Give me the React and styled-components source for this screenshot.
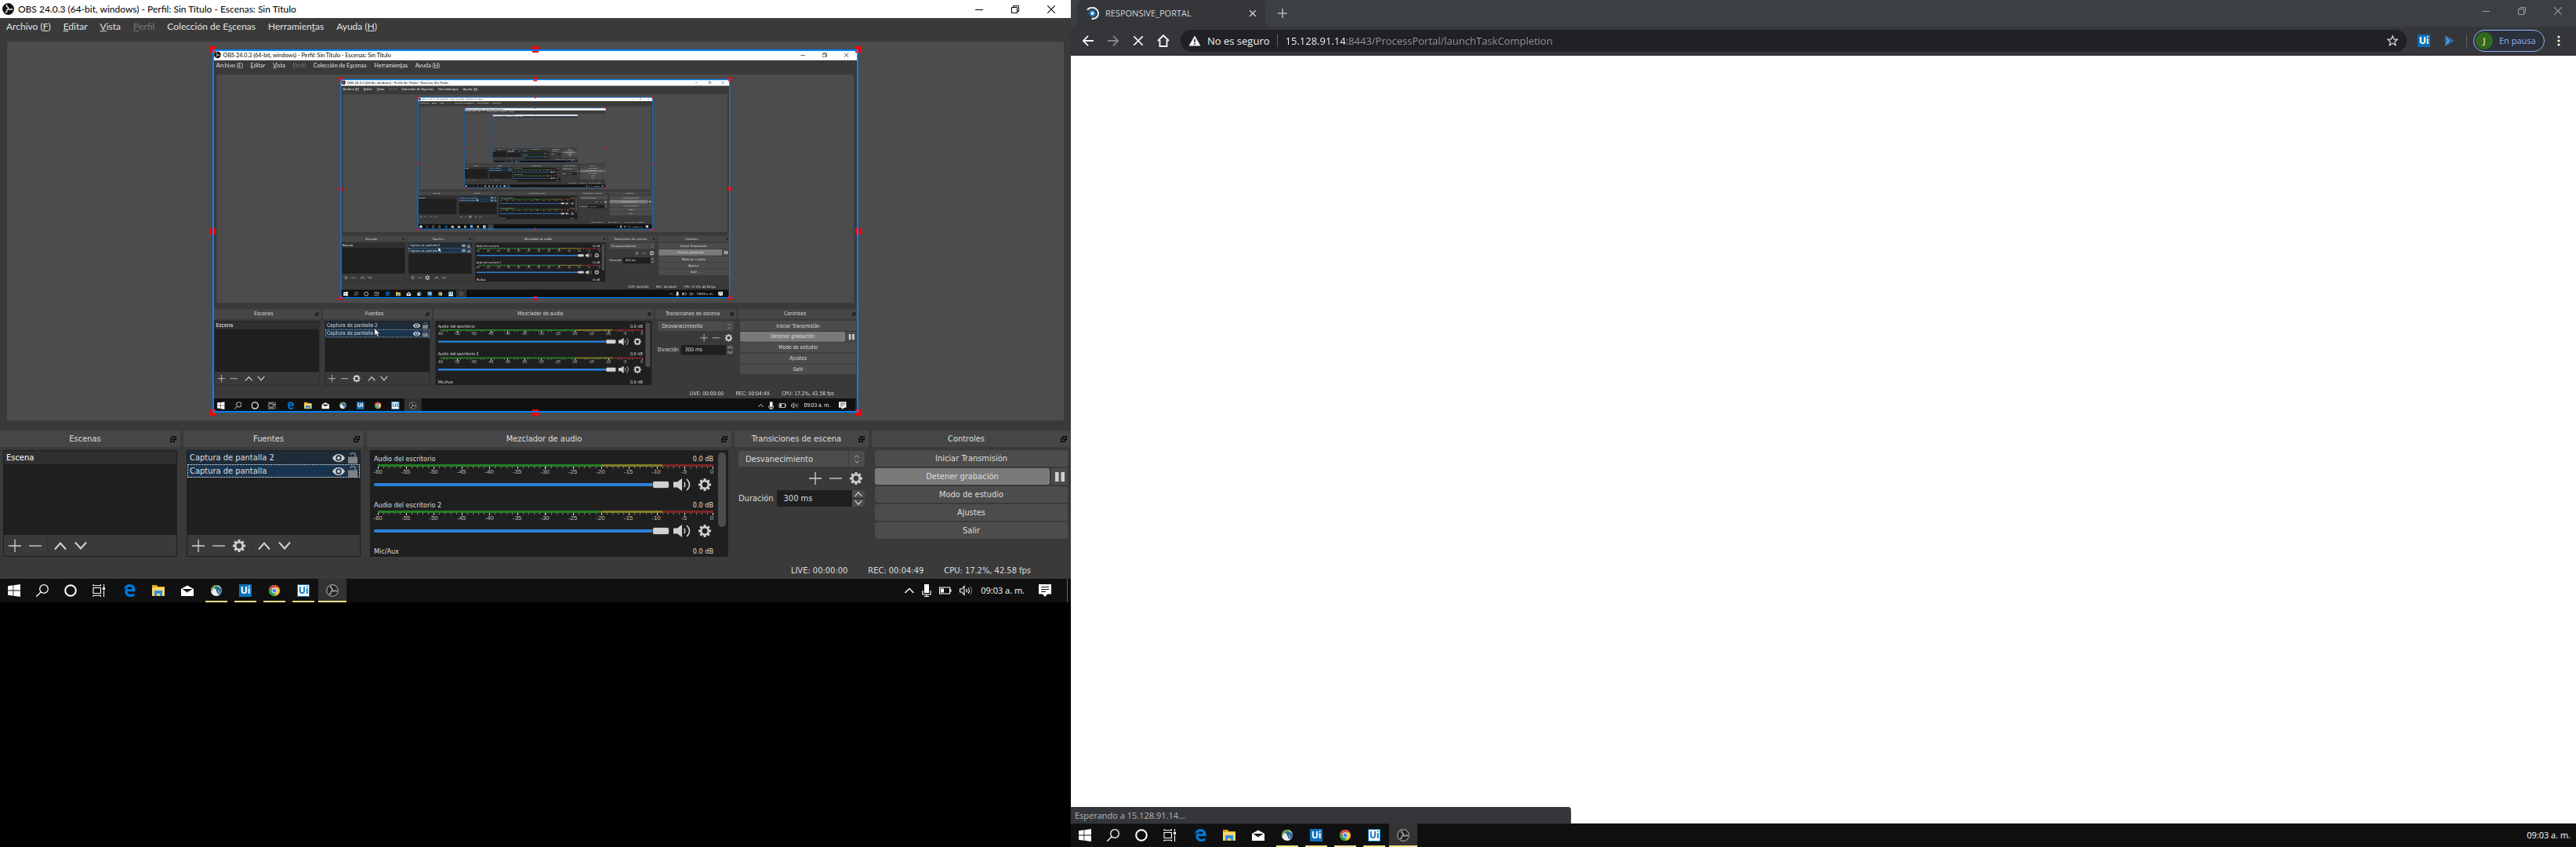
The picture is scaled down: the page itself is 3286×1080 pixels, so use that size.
import React from "react";
import styled, { createGlobalStyle, css } from "styled-components";

const GlobalStyle = createGlobalStyle`
  *, *::before, *::after { box-sizing: border-box; }
  html, body { margin: 0; background: #000; }
  button, input, select { font: inherit; color: inherit; margin: 0; padding: 0; border: 0; background: none; }
`;

const UI_FONT = '"Open Sans", "Noto Sans", sans-serif';
const TITLE_FONT = 'Lato, "Open Sans", sans-serif';
const QT_FONT = '"DejaVu Sans Condensed", "DejaVu Sans", sans-serif';

const CAPTURE_WIDTH = 1366;
const CAPTURE_HEIGHT = 768;
const PREVIEW_SCALE = 0.603;
const MAX_DEPTH = 5;

/* ---------- icons ---------- */

const Svg = styled.svg`
  display: block;
  flex: none;
  fill: none;
  stroke: none;
`;

function Icon({ w = 16, h = w, box, children, ...rest }) {
  return (
    <Svg width={w} height={h} viewBox={box || `0 0 ${w} ${h}`} aria-hidden="true" {...rest}>
      {children}
    </Svg>
  );
}

const PlusIcon = () => (
  <Icon><path d="M8 0v16M0 8h16" stroke="#d2d2d2" strokeWidth="1.3" /></Icon>
);
const MinusIcon = () => (
  <Icon><path d="M0 8h16" stroke="#d2d2d2" strokeWidth="1.3" /></Icon>
);
const UpIcon = ({ size = 16 }) => (
  <Icon w={size} box="0 0 16 16"><path d="M1 12.5 8 4.5l7 8" stroke="#d2d2d2" strokeWidth="2" /></Icon>
);
const DownIcon = ({ size = 16 }) => (
  <Icon w={size} box="0 0 16 16"><path d="M1 3.5l7 8 7-8" stroke="#d2d2d2" strokeWidth="2" /></Icon>
);
const GearIcon = () => (
  <Icon>
    <circle cx="8" cy="8" r="4.7" stroke="#d2d2d2" strokeWidth="2.6" />
    {[0, 45, 90, 135].map((a) => (
      <path key={a} transform={`rotate(${a} 8 8)`} d="M8 0v3M8 13v3" stroke="#d2d2d2" strokeWidth="3" />
    ))}
  </Icon>
);
const EyeIcon = () => (
  <Icon w={16} h={12}>
    <path d="M0 6C2 2.6 4.8 1 8 1s6 1.6 8 5c-2 3.4-4.8 5-8 5S2 9.4 0 6z" fill="#d2d2d2" />
    <circle cx="8" cy="6" r="3.7" fill="#1c2c3c" />
    <circle cx="8" cy="6" r="2" fill="#d2d2d2" />
  </Icon>
);
const LockIcon = () => (
  <Icon w={12} h={14}>
    <path d="M0 5.5h12V14H0z" fill="#808080" />
    <path d="M2.8 3C3.2 1.5 4.4.8 6 .8c2 0 3.3 1.2 3.3 3V6" stroke="#808080" strokeWidth="1.5" />
  </Icon>
);
const SpeakerIcon = () => (
  <Icon w={22} h={16}>
    <path d="M0 4.5h5L11 0v16l-6-4.5H0z" fill="#d2d2d2" />
    <path d="M13.5 5c1.7 1.6 1.7 4.4 0 6M17 1c4.6 4 4.6 10 0 14" stroke="#d2d2d2" strokeWidth="1.5" />
  </Icon>
);
const FloatIcon = () => (
  <Icon w={8} h={8}>
    <path d="M2.5 2.5v-2h5v4h-2" stroke="#0a0a0a" strokeWidth="1.4" />
    <path d="M.7 3.5h4.6v3.8H.7z" stroke="#0a0a0a" strokeWidth="1.4" />
  </Icon>
);
const ObsIcon = ({ size = 15, bg = "#111", fg = "#f0f0f0", ring = "#111" }) => (
  <Icon w={size} box="0 0 16 16">
    <circle cx="8" cy="8" r="7.3" fill={bg} stroke={ring} strokeWidth="1.2" />
    {[0, 120, 240].map((a) => (
      <path
        key={a}
        transform={`rotate(${a} 8 8)`}
        d="M8 8.2C8.6 6.600 8 5.400 6.600 5.100 5.600 4.800 5.400 3.700 6.200 2.700"
        stroke={fg}
        strokeWidth="1.5"
        strokeLinecap="round"
      />
    ))}
  </Icon>
);
const MinimizeIcon = () => (
  <Icon w={10}><path d="M0 5.5h10" stroke="currentColor" /></Icon>
);
const RestoreIcon = () => (
  <Icon w={10}>
    <path d="M.5 2.5h7v7h-7zM2.5 2.5v-2h7v7h-2" stroke="currentColor" />
  </Icon>
);
const CloseIcon = () => (
  <Icon w={10}><path d="M0 0l10 10M10 0L0 10" stroke="currentColor" strokeWidth="1.1" /></Icon>
);
const CursorIcon = () => (
  <Icon w={13} h={20}>
    <path d="M1 1v15l3.5-3.3L7 18.5l2.5-1L7 12h5z" fill="#fff" stroke="#222" strokeWidth=".8" />
  </Icon>
);

const WindowsIcon = () => (
  <Icon>
    <path d="M0 2.2 6.5 1.3v6.3H0zM7.3 1.2 16 0v7.6H7.3zM0 8.4h6.5v6.3L0 13.8zM7.3 8.4H16V16l-8.7-1.2z" fill="#fff" />
  </Icon>
);
const SearchIcon = () => (
  <Icon>
    <circle cx="10" cy="6" r="5.3" stroke="#fff" strokeWidth="1.3" />
    <path d="M6.2 9.8 0 16" stroke="#fff" strokeWidth="1.3" />
  </Icon>
);
const CortanaIcon = () => (
  <Icon><circle cx="8" cy="8" r="6.8" stroke="#fff" strokeWidth="2" /></Icon>
);
const TaskViewIcon = () => (
  <Icon>
    <path d="M1 4.5h9.5v7H1zM1 0v1.8h9.5V0M1 16v-1.8h9.5V16M14.5 0v3.5M14.5 8v8" stroke="#fff" strokeWidth="1.1" />
    <path d="M13 4h3v3h-3z" fill="#fff" />
  </Icon>
);
const EdgeIcon = () => (
  <Icon>
    <path
      d="M.6 7.2C1.3 2.7 4.4 0 8.4 0c4.5 0 7.2 3.2 7.2 7.3v1.9H5.5c.2 2.5 2.2 3.6 4.6 3.6 1.6 0 3.2-.5 4.5-1.3v3.2c-1.6.9-3.4 1.3-5.2 1.3-4.2 0-7.1-2.5-7.1-6.5 0-2.6 1.4-4.7 3.7-5.8-2.5.3-4.2 1.6-5.4 3.5zM5.7 6.3h5.7c0-1.8-.9-3-2.7-3-1.6 0-2.8 1.2-3 3z"
      fill="#0078d7"
    />
  </Icon>
);
const FolderIcon = () => (
  <Icon>
    <path d="M0 1h6l1.5 2H16v12H0z" fill="#e8a317" />
    <path d="M0 4h16v10.5H0z" fill="#ffd567" />
    <path d="M3 8h10v7h-3v-3H6v3H3z" fill="#2f8fdd" />
  </Icon>
);
const MailIcon = () => (
  <Icon>
    <path d="M0 6 8 1.5 16 6v9H0z" fill="#fff" />
    <path d="M1.5 6h13L8 10.5z" fill="#101010" />
    <path d="M8 8.2 12 12" stroke="#fff" strokeWidth=".6" />
  </Icon>
);
const GlobeIcon = () => (
  <Icon>
    <circle cx="8" cy="8" r="7" fill="#e9eef2" />
    <path d="M1 7C2 3 5 1 8.5 1c2 0 3.5.6 4.7 1.7C8 2 4 4 2.6 9 1.5 8.6 1 8 1 7z" fill="#6fa24a" />
    <path d="M7 3.2c4-.6 7.5 1.6 7.9 5.1.3 2.9-1.3 5.2-4 6.3 1.5-2 1.7-4-.2-6.1C9.4 7 8.5 6.3 6 6c-1.4-.2-.7-2.4 1-2.8z" fill="#2c6d9e" />
    <path d="M8 6.5l3 6" stroke="#123b57" strokeWidth="1.6" />
  </Icon>
);
const ChromeIcon = () => (
  <Icon>
    <circle cx="8" cy="8" r="7" fill="#f7c52d" />
    <path d="M1.9 4.5A7 7 0 0 1 14.1 4.6H8L5 9.8z" fill="#dd4b3e" />
    <path d="M1.9 4.5A7 7 0 0 0 7.6 15l3.4-5.2-5.9.2z" fill="#2aa152" />
    <circle cx="8" cy="8" r="3.4" fill="#fff" />
    <circle cx="8" cy="8" r="2.6" fill="#4a86e8" />
  </Icon>
);
const ChevronUpThin = () => (
  <Icon w={12} h={8}><path d="M.5 7 6 1.5 11.5 7" stroke="#fff" strokeWidth="1.3" /></Icon>
);
const MicIcon = () => (
  <Icon w={12} h={16}>
    <path d="M3 0h6v11H3z" fill="#fff" />
    <path d="M1 8v5h10V8M6 13v3M3 15.5h6" stroke="#fff" strokeWidth="1.2" />
  </Icon>
);
const BatteryIcon = () => (
  <Icon w={16} h={10}>
    <path d="M.6 1h13v8H.6z" stroke="#fff" strokeWidth="1.2" />
    <path d="M2 2.5h4v5H2zM14 3.5h1.5v3H14z" fill="#fff" />
  </Icon>
);
const TraySpeakerIcon = () => (
  <Icon w={17} h={14}>
    <path d="M.6 5h2.4l3-3.5v11L3 9H.6z" stroke="#fff" strokeWidth="1.1" />
    <path d="M8.5 5c1 1.2 1 3 0 4M10.8 3.5c2 2.2 2 5 0 7" stroke="#fff" strokeWidth="1.1" />
    <path d="M13.3 1.5c2.8 3.2 2.8 7.8 0 11" stroke="#777" strokeWidth="1.1" />
  </Icon>
);
const ActionIcon = () => (
  <Icon>
    <path d="M0 0h16v12.5h-5L8 16l-3-3.5H0z" fill="#fff" />
    <path d="M3 3.5h10M3 6.5h10M3 9.5h6" stroke="#101010" />
  </Icon>
);

const UiBadge = styled.span`
  display: grid;
  place-items: center;
  width: 16px;
  height: 16px;
  font: 700 12px/14px ${UI_FONT};
  color: ${(p) => (p.$inverse ? "#0a72b8" : "#fff")};
  background: ${(p) => (p.$inverse ? "#fff" : "#0d70b8")};
  border: ${(p) => (p.$inverse ? "1px solid #0d70b8" : "0")};
`;

/* ---------- window buttons ---------- */

const CaptionButtons = styled.div`
  display: flex;
  margin-left: auto;
  color: ${(p) => p.$color};
`;
const CaptionButton = styled.button`
  display: grid;
  place-items: center;
  width: 46px;
  height: ${(p) => p.$height}px;
`;
function WindowButtons({ color, height }) {
  return (
    <CaptionButtons $color={color}>
      <CaptionButton $height={height} aria-label="Minimizar"><MinimizeIcon /></CaptionButton>
      <CaptionButton $height={height} aria-label="Restaurar"><RestoreIcon /></CaptionButton>
      <CaptionButton $height={height} aria-label="Cerrar"><CloseIcon /></CaptionButton>
    </CaptionButtons>
  );
}

/* ---------- taskbar ---------- */

const TaskbarRoot = styled.footer`
  display: flex;
  align-items: center;
  flex: none;
  height: 30px;
  background: #101010;
  color: #fff;
`;
const SystemButton = styled.button`
  display: grid;
  place-items: center;
  width: 36px;
  height: 30px;
`;
const Tasks = styled.div`
  display: flex;
  gap: 1px;
  margin-left: 3px;
`;
const TaskButton = styled.button`
  display: grid;
  place-items: center;
  width: 36px;
  height: 30px;
  background: ${(p) => (p.$active ? "#333" : "transparent")};
  ${(p) =>
    p.$open &&
    css`
      background-image: linear-gradient(#ffe08a, #ffe08a);
      background-repeat: no-repeat;
      background-position: bottom center;
      background-size: ${p.$active ? 36 : 28}px 2px;
    `}
`;
const Tray = styled.div`
  display: flex;
  align-items: center;
  gap: 10px;
  margin-left: auto;
  padding-right: ${(p) => (p.$full ? 4 : 7)}px;
  font: 11px/16px ${UI_FONT};
  white-space: nowrap;
`;
const Clock = styled.time`
  margin-right: ${(p) => (p.$full ? 8 : 0)}px;
`;
const ShowDesktop = styled.span`
  width: 1px;
  height: 30px;
  margin-left: 10px;
  background: #666;
`;

const TASKS = [
  { name: "Edge", icon: <EdgeIcon /> },
  { name: "Explorador", icon: <FolderIcon /> },
  { name: "Correo", icon: <MailIcon /> },
  { name: "Navegador", icon: <GlobeIcon />, open: true },
  { name: "UiPath", icon: <UiBadge>Ui</UiBadge>, open: true },
  { name: "Chrome", icon: <ChromeIcon />, open: true },
  { name: "UiPath Studio", icon: <UiBadge $inverse>Ui</UiBadge>, open: true },
  { name: "OBS", icon: <ObsIcon size={16} bg="#222" fg="#aaa" ring="#999" />, open: true, active: true },
];

function Taskbar({ full }) {
  return (
    <TaskbarRoot>
      <SystemButton aria-label="Inicio"><WindowsIcon /></SystemButton>
      <SystemButton aria-label="Buscar"><SearchIcon /></SystemButton>
      <SystemButton aria-label="Cortana"><CortanaIcon /></SystemButton>
      <SystemButton aria-label="Vista de tareas"><TaskViewIcon /></SystemButton>
      <Tasks>
        {TASKS.map((t) => (
          <TaskButton key={t.name} aria-label={t.name} $open={t.open} $active={t.active}>
            {t.icon}
          </TaskButton>
        ))}
      </Tasks>
      <Tray $full={full}>
        {full && (
          <>
            <ChevronUpThin />
            <MicIcon />
            <BatteryIcon />
            <TraySpeakerIcon />
          </>
        )}
        <Clock $full={full}>09:03 a. m.</Clock>
        {full && (
          <>
            <ActionIcon />
            <ShowDesktop />
          </>
        )}
      </Tray>
    </TaskbarRoot>
  );
}

/* ---------- OBS window ---------- */

const DesktopRoot = styled.section`
  position: relative;
  display: flex;
  flex-direction: column;
  align-self: start;
  aspect-ratio: ${CAPTURE_WIDTH} / ${CAPTURE_HEIGHT};
  width: ${(p) => (p.$capture ? `${CAPTURE_WIDTH}px` : "100%")};
  min-width: 0;
`;
const ObsWindow = styled.div`
  display: flex;
  flex: 1;
  flex-direction: column;
  min-height: 0;
  background: #3a3a3a;
  color: #dedede;
  font: 11px/14px ${QT_FONT};
`;
const TitleBar = styled.header`
  display: flex;
  align-items: center;
  height: 23px;
  padding: 0 2px 0 3px;
  gap: 5px;
  background: #fff;
  color: #000;
  font: 12px/22px ${TITLE_FONT};
  white-space: nowrap;
`;
const MenuBar = styled.nav`
  display: flex;
  height: 30px;
  font: 12px/22px ${TITLE_FONT};
`;
const MenuItem = styled.button`
  height: 22px;
  padding: 0 8px;
  color: ${(p) => (p.disabled ? "#777" : "#e2e2e2")};
  white-space: nowrap;
`;
const PreviewArea = styled.div`
  display: grid;
  place-items: center;
  flex: 1;
  min-height: 0;
  margin: 0 9px 13px;
  background: #4c4c4c;
`;
const PreviewFrame = styled.div`
  position: relative;
  width: 824px;
  height: 463px;
  &::after {
    content: "";
    position: absolute;
    inset: 0;
    border: 2px solid #0080ff;
  }
`;
const PreviewClip = styled.div`
  width: 100%;
  height: 100%;
  overflow: hidden;
  background: #4c4c4c;
`;
const CaptureSurface = styled.div`
  width: ${CAPTURE_WIDTH}px;
  height: ${CAPTURE_HEIGHT}px;
  transform: scale(${PREVIEW_SCALE});
  transform-origin: 0 0;
`;
const Handle = styled.span`
  position: absolute;
  left: ${(p) => p.$x}%;
  top: ${(p) => p.$y}%;
  width: 8px;
  height: 8px;
  margin: -4px;
  background: #f00;
`;
const HANDLES = [[0, 0], [50, 0], [100, 0], [0, 50], [100, 50], [0, 100], [50, 100], [100, 100]];

const CapturedCursor = styled.span`
  position: absolute;
  left: 342px;
  top: 589px;
`;

const Docks = styled.div`
  display: grid;
  grid-template-columns: 230fr 230fr 465fr 171fr 254fr;
  gap: 4px;
  height: 160px;
`;
const Dock = styled.section`
  display: flex;
  flex-direction: column;
  min-width: 0;
`;
const DockHeader = styled.header`
  display: flex;
  align-items: center;
  height: 21px;
  padding-right: 5px;
  background: #464646;
`;
const DockTitle = styled.h2`
  flex: 1;
  margin: 0;
  padding-top: 1px;
  font: inherit;
  text-align: center;
  white-space: nowrap;
`;
const DockBody = styled.div`
  display: flex;
  flex: 1;
  flex-direction: column;
  gap: ${(p) => p.$gap || 0}px;
  min-height: 0;
  padding: ${(p) => p.$pad || "4px 4px 0"};
`;
const ListBox = styled.div`
  display: flex;
  flex: 1;
  flex-direction: column;
  border: 1px solid #1e1e1e;
`;
const List = styled.ul`
  flex: 1;
  margin: 0;
  padding: 0;
  list-style: none;
  background: #1f1f1f;
`;
const ListRow = styled.li`
  display: flex;
  align-items: center;
  gap: 4px;
  height: 17px;
  padding: 0 3px;
  color: ${(p) => (p.$plain ? "#fff" : "#dedede")};
  background: ${(p) => p.$bg};
  outline: ${(p) => (p.$focused ? "1px dotted #fff" : "0")};
  outline-offset: -1px;
  white-space: nowrap;
`;
const RowName = styled.span`
  flex: 1;
  padding-top: 1px;
`;
const Toolbar = styled.div`
  display: flex;
  align-items: center;
  height: 27px;
  padding-left: 1px;
  background: #3a3a3a;
`;
const ToolButton = styled.button`
  display: grid;
  place-items: center;
  width: 26px;
  height: 26px;
`;
const ToolDivider = styled.span`
  width: 1px;
  height: 18px;
  margin: 0 3px 0 2px;
  background: #303030;
`;

function DockPanel({ title, gap, pad, children }) {
  return (
    <Dock>
      <DockHeader>
        <DockTitle>{title}</DockTitle>
        <FloatIcon />
      </DockHeader>
      <DockBody $gap={gap} $pad={pad}>{children}</DockBody>
    </Dock>
  );
}

const Mixer = styled.div`
  display: flex;
  flex: 1;
  gap: 6px;
  min-height: 0;
  padding: 3px 3px 0 5px;
  overflow: hidden;
  background: #1f1f1f;
`;
const Channels = styled.div`
  display: flex;
  flex: 1;
  flex-direction: column;
  gap: 10px;
  min-width: 0;
  padding-top: 1px;
`;
const ScrollThumb = styled.span`
  width: 10px;
  height: 95px;
  border-radius: 5px;
  background: #4c4c4c;
`;
const ChannelName = styled.div`
  display: flex;
  justify-content: space-between;
  height: 14px;
  font-size: 9px;
`;
const Level = styled.span`
  font-size: 9px;
`;
const Meter = styled.div`
  height: 3px;
  margin-left: 5px;
  background: linear-gradient(to right, #267f26 66.6%, #7f7f26 66.6% 84.8%, #7f2626 84.8%);
`;
const Ticks = styled.div`
  height: 3px;
  margin-left: 5px;
  border-right: 1px solid #ddd;
  background:
    repeating-linear-gradient(to right, #ddd 0 1px, transparent 1px calc(100% / 12)) 0 0 / 100% 3px no-repeat,
    repeating-linear-gradient(to right, #888 0 1px, transparent 1px calc(100% / 60)) 0 0 / 100% 2px no-repeat;
`;
const Scale = styled.div`
  display: flex;
  justify-content: space-between;
  height: 8px;
  margin: 0 -4px 0 -1px;
  font: 8px/8px "Liberation Sans", Arial, sans-serif;
  color: #bbb;
`;
const ScaleMark = styled.span`
  width: 12px;
  text-align: center;
  white-space: nowrap;
`;
const FaderRow = styled.div`
  display: flex;
  align-items: center;
  gap: 10px;
  height: 18px;
  margin-top: 3px;
  padding-right: 3px;
`;
const FaderLabel = styled.label`
  display: flex;
  flex: 1;
  margin-right: -4px;
`;
const Fader = styled.input`
  flex: 1;
  min-width: 0;
  height: 10px;
  appearance: none;
  &::-webkit-slider-runnable-track {
    height: 4px;
    border-radius: 2px;
    background: #2a82da;
  }
  &::-webkit-slider-thumb {
    appearance: none;
    width: 20px;
    height: 8px;
    margin-top: -2px;
    border-radius: 2px;
    background: #d2d2d2;
    box-shadow: 0 0 0 1px #3a3a3a;
  }
`;
const IconButton = styled.button`
  display: grid;
  place-items: center;
`;

const MARKS = [-60, -55, -50, -45, -40, -35, -30, -25, -20, -15, -10, -5, 0];

function Channel({ name, nameOnly }) {
  return (
    <div>
      <ChannelName>
        <span>{name}</span>
        <Level>0.0 dB</Level>
      </ChannelName>
      {!nameOnly && (
        <>
          <Meter />
          <Ticks />
          <Scale>
            {MARKS.map((m) => (
              <ScaleMark key={m}>{m}</ScaleMark>
            ))}
          </Scale>
          <FaderRow>
            <FaderLabel>
              <Fader type="range" min="0" max="100" defaultValue="100" aria-label={name} />
            </FaderLabel>
            <IconButton aria-label="Silenciar"><SpeakerIcon /></IconButton>
            <IconButton aria-label="Opciones"><GearIcon /></IconButton>
          </FaderRow>
        </>
      )}
    </div>
  );
}

const SelectBox = styled.div`
  display: flex;
  height: 20px;
  border-radius: 3px;
  background: #4c4c4c;
`;
const TransitionSelect = styled.select`
  flex: 1;
  min-width: 0;
  padding: 1px 0 0 9px;
  appearance: none;
`;
const SelectArrows = styled.span`
  display: grid;
  place-content: center;
  gap: 1px;
  width: 21px;
  border-left: 1px solid #3a3a3a;
`;
const TransitionTools = styled.div`
  display: flex;
  align-items: center;
  justify-content: flex-end;
  gap: 10px;
  height: 30px;
  padding-right: 3px;
`;
const DurationField = styled.label`
  display: flex;
  align-items: center;
  gap: 4px;
  height: 21px;
`;
const DurationBox = styled.span`
  display: flex;
  flex: 1;
  min-width: 0;
  height: 21px;
  border-radius: 3px;
  overflow: hidden;
  background: #1f1f1f;
`;
const DurationInput = styled.input`
  flex: 1;
  min-width: 0;
  padding: 1px 0 0 9px;
`;
const Stepper = styled.span`
  display: flex;
  flex-direction: column;
  gap: 1px;
  width: 16px;
`;
const StepButton = styled.button`
  display: grid;
  place-items: center;
  flex: 1;
  background: #4c4c4c;
`;
const ControlButton = styled.button`
  display: grid;
  place-items: center;
  flex: ${(p) => (p.$grow ? "1" : "none")};
  width: ${(p) => (p.$square ? "21px" : "auto")};
  height: 21px;
  padding-top: ${(p) => (p.$square ? 0 : 1)}px;
  border-radius: 3px;
  background: ${(p) => (p.$checked ? "#7a7a7a" : "#4c4c4c")};
`;
const ControlRow = styled.div`
  display: flex;
  gap: 2px;
`;
const StatusBar = styled.div`
  display: flex;
  justify-content: flex-end;
  gap: 26px;
  height: 29px;
  padding: 7px 51px 0 0;
  line-height: 24px;
  white-space: nowrap;
`;

function ObsDesktop({ depth = 0 }) {
  return (
    <DesktopRoot $capture={depth > 0} aria-hidden={depth > 0 || undefined} inert={depth > 0}>
      <ObsWindow>
        <TitleBar>
          <ObsIcon />
          <span>OBS 24.0.3 (64-bit, windows) - Perfil: Sin Título - Escenas: Sin Título</span>
          <WindowButtons color="#000" height={21} />
        </TitleBar>
        <MenuBar>
          <MenuItem>Archivo (<u>F</u>)</MenuItem>
          <MenuItem><u>E</u>ditar</MenuItem>
          <MenuItem><u>V</u>ista</MenuItem>
          <MenuItem disabled><u>P</u>erfil</MenuItem>
          <MenuItem>Colección de E<u>s</u>cenas</MenuItem>
          <MenuItem>Herramien<u>t</u>as</MenuItem>
          <MenuItem>Ayuda (<u>H</u>)</MenuItem>
        </MenuBar>
        <PreviewArea>
          <PreviewFrame>
            <PreviewClip>
              {depth < MAX_DEPTH && (
                <CaptureSurface>
                  <ObsDesktop depth={depth + 1} />
                </CaptureSurface>
              )}
            </PreviewClip>
            {HANDLES.map(([x, y]) => (
              <Handle key={`${x}-${y}`} $x={x} $y={y} />
            ))}
          </PreviewFrame>
        </PreviewArea>
        <Docks>
          <DockPanel title="Escenas">
            <ListBox>
              <List>
                <ListRow $plain $bg="#2f2f2f"><RowName>Escena</RowName></ListRow>
              </List>
              <Toolbar>
                <ToolButton aria-label="Agregar"><PlusIcon /></ToolButton>
                <ToolButton aria-label="Quitar"><MinusIcon /></ToolButton>
                <ToolDivider />
                <ToolButton aria-label="Subir"><UpIcon /></ToolButton>
                <ToolButton aria-label="Bajar"><DownIcon /></ToolButton>
              </Toolbar>
            </ListBox>
          </DockPanel>
          <DockPanel title="Fuentes">
            <ListBox>
              <List>
                <ListRow $bg="#1e2b38">
                  <RowName>Captura de pantalla 2</RowName>
                  <EyeIcon />
                  <LockIcon />
                </ListRow>
                <ListRow $bg="#19344e" $focused>
                  <RowName>Captura de pantalla</RowName>
                  <EyeIcon />
                  <LockIcon />
                </ListRow>
              </List>
              <Toolbar>
                <ToolButton aria-label="Agregar"><PlusIcon /></ToolButton>
                <ToolButton aria-label="Quitar"><MinusIcon /></ToolButton>
                <ToolButton aria-label="Propiedades"><GearIcon /></ToolButton>
                <ToolDivider />
                <ToolButton aria-label="Subir"><UpIcon /></ToolButton>
                <ToolButton aria-label="Bajar"><DownIcon /></ToolButton>
              </Toolbar>
            </ListBox>
          </DockPanel>
          <DockPanel title="Mezclador de audio">
            <Mixer>
              <Channels>
                <Channel name="Audio del escritorio" />
                <Channel name="Audio del escritorio 2" />
                <Channel name="Mic/Aux" nameOnly />
              </Channels>
              <ScrollThumb />
            </Mixer>
          </DockPanel>
          <DockPanel title="Transiciones de escena" pad="5px 5px 0">
            <SelectBox>
              <TransitionSelect aria-label="Transición">
                <option>Desvanecimiento</option>
              </TransitionSelect>
              <SelectArrows>
                <UpIcon size={6} />
                <DownIcon size={6} />
              </SelectArrows>
            </SelectBox>
            <TransitionTools>
              <IconButton aria-label="Agregar"><PlusIcon /></IconButton>
              <IconButton aria-label="Quitar"><MinusIcon /></IconButton>
              <IconButton aria-label="Propiedades"><GearIcon /></IconButton>
            </TransitionTools>
            <DurationField>
              Duración
              <DurationBox>
                <DurationInput type="text" size="6" defaultValue="300 ms" />
                <Stepper>
                  <StepButton aria-label="Aumentar"><UpIcon size={10} /></StepButton>
                  <StepButton aria-label="Reducir"><DownIcon size={10} /></StepButton>
                </Stepper>
              </DurationBox>
            </DurationField>
          </DockPanel>
          <DockPanel title="Controles" gap={2}>
            <ControlButton>Iniciar Transmisión</ControlButton>
            <ControlRow>
              <ControlButton $grow $checked>Detener grabación</ControlButton>
              <ControlButton $square aria-label="Pausar">
                <Icon w={12}><path d="M0 0h4.5v12H0zM7.5 0H12v12H7.5z" fill="#d2d2d2" /></Icon>
              </ControlButton>
            </ControlRow>
            <ControlButton>Modo de estudio</ControlButton>
            <ControlButton>Ajustes</ControlButton>
            <ControlButton>Salir</ControlButton>
          </DockPanel>
        </Docks>
        <StatusBar>
          <span>LIVE: 00:00:00</span>
          <span>REC: 00:04:49</span>
          <span>CPU: 17.2%, 42.58 fps</span>
        </StatusBar>
      </ObsWindow>
      <Taskbar full />
      {depth > 0 && (
        <CapturedCursor><CursorIcon /></CapturedCursor>
      )}
    </DesktopRoot>
  );
}

/* ---------- Chrome window ---------- */

const BrowserDesktop = styled.section`
  display: flex;
  flex-direction: column;
  min-width: 0;
  height: 100vh;
  font: 11px/16px ${UI_FONT};
`;
const TabStrip = styled.header`
  display: flex;
  height: 34px;
  padding-left: 8px;
  background: #3c4043;
`;
const Tab = styled.div`
  position: relative;
  display: flex;
  align-items: center;
  width: 240px;
  height: 34px;
  padding: 0 11px 0 12px;
  border-radius: 8px 8px 0 0;
  background: #35363a;
  color: #d0d2d5;
  &::before, &::after {
    content: "";
    position: absolute;
    bottom: 0;
    width: 8px;
    height: 8px;
  }
  &::before { left: -8px; background: radial-gradient(circle at 0 0, transparent 8px, #35363a 8px); }
  &::after { right: -8px; background: radial-gradient(circle at 100% 0, transparent 8px, #35363a 8px); }
`;
const TabTitle = styled.span`
  flex: 1;
  margin-left: 8px;
  white-space: nowrap;
`;
const TabButton = styled.button`
  display: grid;
  place-items: center;
  width: ${(p) => p.$w || 10}px;
  height: 34px;
`;
const BrowserBar = styled.div`
  display: flex;
  align-items: center;
  height: 37px;
  padding: 0 6px;
  border-bottom: 1px solid #292123;
  background: #35363a;
`;
const BarButton = styled.button`
  display: grid;
  place-items: center;
  flex: none;
  width: 32px;
  height: 32px;
`;
const Omnibox = styled.div`
  display: flex;
  flex: 1;
  align-items: center;
  height: 28px;
  margin: 0 6px;
  padding: 0 10px;
  border-radius: 14px;
  background: #202124;
  color: #f0f1f2;
  font: 13px/20px ${UI_FONT};
  white-space: nowrap;
`;
const Insecure = styled.span`
  margin: 0 9px 0 8px;
`;
const Rule = styled.span`
  flex: none;
  width: 1px;
  height: 16px;
  margin: ${(p) => p.$m || "0"};
  background: #5f6368;
`;
const Url = styled.input`
  flex: 1;
  min-width: 0;
  height: 20px;
  margin-left: 10px;
  background: linear-gradient(to right, #fff 77px, #96999d 77px);
  background-clip: text;
  -webkit-text-fill-color: transparent;
`;
const ProfilePill = styled.button`
  display: flex;
  align-items: center;
  flex: none;
  gap: 8px;
  width: 91px;
  height: 28px;
  margin-right: 2px;
  padding-left: 2px;
  border: 1px solid #8ab4f8;
  border-radius: 14px;
  background: #2b303b;
  color: #8ab4f8;
  white-space: nowrap;
`;
const Avatar = styled.span`
  display: grid;
  place-items: center;
  width: 22px;
  height: 22px;
  border-radius: 50%;
  background: #33691e;
  color: #fff;
`;
const Page = styled.main`
  position: relative;
  flex: 1;
  min-height: 0;
  background: #fff;
`;
const LoadStatus = styled.div`
  position: absolute;
  left: 0;
  bottom: 0;
  width: 638px;
  max-width: 100%;
  height: 21px;
  padding-left: 5px;
  border-top-right-radius: 4px;
  background: #35363a;
  color: #b4b7ba;
  line-height: 21px;
  box-shadow: 0 0 1px #888;
`;

const PortalIcon = () => (
  <Icon>
    <circle cx="7.5" cy="8" r="3.6" fill="#2a75b8" stroke="#2a75b8" />
    <path d="M7.5 3v10M2.5 8h10M4 4.5l7 7M11 4.5l-7 7" stroke="#2a75b8" strokeWidth="1.4" />
    <circle cx="7.5" cy="8" r="1.9" fill="#fff" />
    <path d="M1 3.5C4 0 9 0 12 2.2c3.5 2.6 4 7.3 1.5 10.3-1.6 1.9-4 2.7-7 2.5" stroke="#e8eef4" strokeWidth="2" />
  </Icon>
);

function BrowserWindow() {
  return (
    <BrowserDesktop>
      <TabStrip>
        <Tab>
          <PortalIcon />
          <TabTitle>RESPONSIVE_PORTAL</TabTitle>
          <TabButton aria-label="Cerrar pestaña">
            <Icon w={8}><path d="M0 0l8 8M8 0L0 8" stroke="#d0d2d5" strokeWidth="1.4" /></Icon>
          </TabButton>
        </Tab>
        <TabButton $w={44} aria-label="Nueva pestaña">
          <Icon w={12}><path d="M6 0v12M0 6h12" stroke="#b4b7ba" strokeWidth="1.6" /></Icon>
        </TabButton>
        <WindowButtons color="#9a9da0" height={28} />
      </TabStrip>
      <BrowserBar>
        <BarButton aria-label="Atrás">
          <Icon w={14}><path d="M14 7H1.5M7 .8.8 7 7 13.2" stroke="#f1f3f4" strokeWidth="1.8" /></Icon>
        </BarButton>
        <BarButton aria-label="Adelante">
          <Icon w={14}><path d="M0 7h12.5M7 .8 13.2 7 7 13.2" stroke="#85878a" strokeWidth="1.8" /></Icon>
        </BarButton>
        <BarButton aria-label="Detener">
          <Icon w={12}><path d="M0 0l12 12M12 0L0 12" stroke="#f1f3f4" strokeWidth="1.7" /></Icon>
        </BarButton>
        <BarButton aria-label="Inicio">
          <Icon w={16}><path d="M1 8 8 1.2 15 8M3.5 7v8h9V7" stroke="#f1f3f4" strokeWidth="1.9" /></Icon>
        </BarButton>
        <Omnibox>
          <Icon w={16}>
            <path d="M8 1.5 15.5 14.5H.5z" fill="#f1f3f4" />
            <path d="M8 6v4M8 11.3v1.6" stroke="#202124" strokeWidth="1.6" />
          </Icon>
          <Insecure>No es seguro</Insecure>
          <Rule />
          <Url
            type="text"
            aria-label="Dirección"
            defaultValue="15.128.91.14:8443/ProcessPortal/launchTaskCompletion"
          />
          <IconButton aria-label="Favoritos">
            <Icon w={16}>
              <path d="M8 1.8l1.7 4.1 4.5.4-3.4 2.9 1 4.4L8 11.3l-3.8 2.3 1-4.4L1.8 6.3l4.5-.4z" stroke="#d5d7da" strokeWidth="1.3" />
            </Icon>
          </IconButton>
        </Omnibox>
        <BarButton aria-label="UiPath"><UiBadge>Ui</UiBadge></BarButton>
        <BarButton aria-label="Extensión">
          <Icon w={13} h={14}>
            <path d="M1 0l12 7-12 7z" fill="#2a6cab" />
            <path d="M1 0l6 7-6 7 3-7z" fill="#5fa0d8" />
          </Icon>
        </BarButton>
        <Rule $m="0 8px 0 6px" />
        <ProfilePill>
          <Avatar>J</Avatar>
          En pausa
        </ProfilePill>
        <BarButton aria-label="Menú">
          <Icon w={4} h={14}>
            <circle cx="2" cy="2" r="1.6" fill="#f1f3f4" />
            <circle cx="2" cy="7" r="1.6" fill="#f1f3f4" />
            <circle cx="2" cy="12" r="1.6" fill="#f1f3f4" />
          </Icon>
        </BarButton>
      </BrowserBar>
      <Page>
        <LoadStatus>Esperando a 15.128.91.14...</LoadStatus>
      </Page>
      <Taskbar />
    </BrowserDesktop>
  );
}

const Screens = styled.div`
  display: grid;
  grid-template-columns: ${CAPTURE_WIDTH}fr 1920fr;
  min-height: 100vh;
  background: #000;
`;

export default function App() {
  return (
    <>
      <GlobalStyle />
      <Screens>
        <ObsDesktop />
        <BrowserWindow />
      </Screens>
    </>
  );
}
